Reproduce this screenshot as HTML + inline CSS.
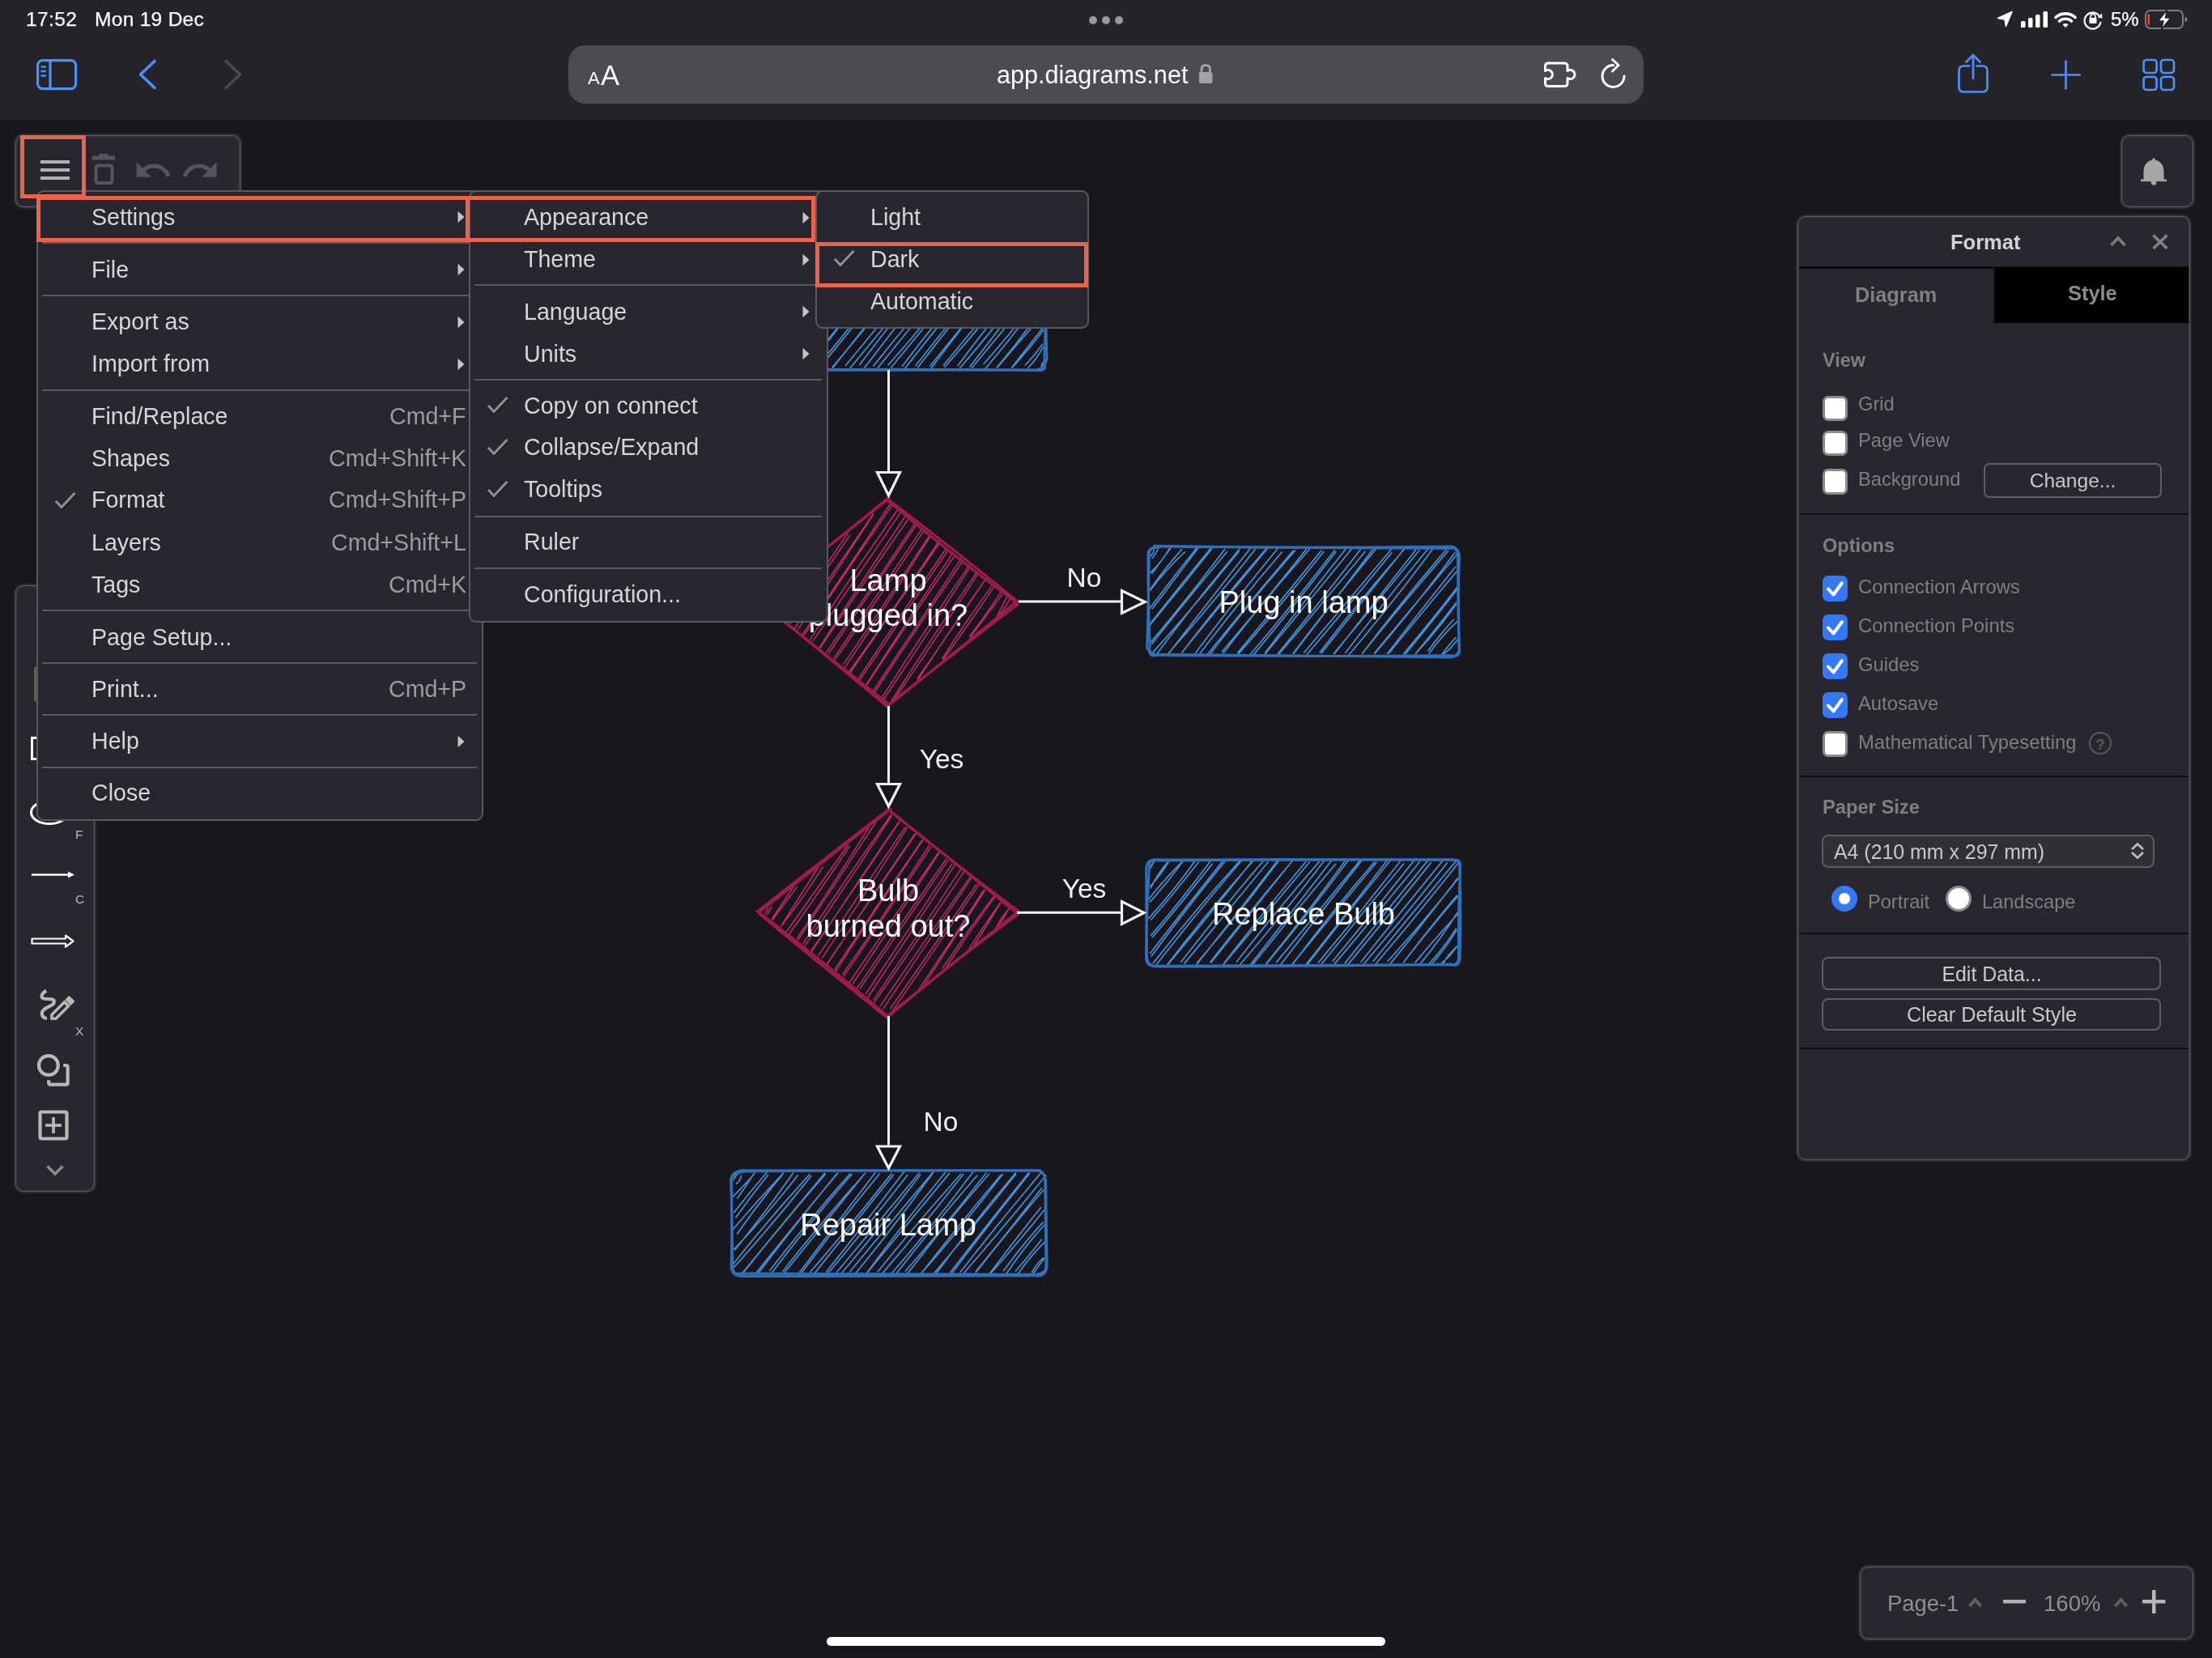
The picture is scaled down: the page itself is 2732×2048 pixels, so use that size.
<!DOCTYPE html>
<html><head><meta charset="utf-8"><title>draw.io</title>
<style>
html,body{margin:0;padding:0;}
body{width:2732px;height:2048px;overflow:hidden;position:relative;background:#19161d;font-family:"Liberation Sans", sans-serif;}
.t{position:absolute;white-space:nowrap;line-height:1;font-family:"Liberation Sans", sans-serif;will-change:transform;}
</style></head><body>
<div style="position:absolute;left:0.0px;top:0.0px;width:2732.0px;height:148.0px;background:#252429"></div>
<div class="t" style="left:32.0px;top:11.7px;font-size:24.5px;color:#fff;font-weight:400;-webkit-text-stroke:0.25px #fff;letter-spacing:0.4px">17:52</div>
<div class="t" style="left:116.5px;top:11.7px;font-size:24.5px;color:#fff;font-weight:400;-webkit-text-stroke:0.25px #fff;letter-spacing:0.3px">Mon 19 Dec</div>
<div style="position:absolute;left:1345px;top:20px;width:10px;height:10px;border-radius:5px;background:#9a999e"></div>
<div style="position:absolute;left:1361px;top:20px;width:10px;height:10px;border-radius:5px;background:#9a999e"></div>
<div style="position:absolute;left:1377px;top:20px;width:10px;height:10px;border-radius:5px;background:#9a999e"></div>
<div class="t" style="left:2607.0px;top:11.9px;font-size:24px;color:#fff;font-weight:400;-webkit-text-stroke:0.25px #fff">5%</div>
<div style="position:absolute;left:702.0px;top:56.0px;width:1328.0px;height:72.0px;background:#4c4b51;border-radius:21px"></div>
<div class="t" style="left:725.5px;top:86.4px;font-size:22px;color:#fff;font-weight:400;">A</div>
<div class="t" style="left:741.5px;top:75.8px;font-size:34.5px;color:#fff;font-weight:400;">A</div>
<div class="t" style="left:1231.0px;top:77.1px;font-size:30.6px;color:#fff;font-weight:400;">app.diagrams.net</div>
<svg style="position:absolute;left:0;top:0" width="2732" height="148" viewBox="0 0 2732 148">
<g fill="none" stroke="#4f8ef6" stroke-width="3.2" stroke-linecap="round" stroke-linejoin="round">
 <rect x="46.6" y="74.6" width="47" height="35" rx="6"/>
 <line x1="62" y1="75" x2="62" y2="110"/>
 <line x1="51.5" y1="82.5" x2="56" y2="82.5" stroke-width="2.4"/>
 <line x1="51.5" y1="88" x2="56" y2="88" stroke-width="2.4"/>
 <line x1="51.5" y1="93.5" x2="56" y2="93.5" stroke-width="2.4"/>
 <polyline points="191,75.5 173.5,92 191,108.5" stroke-width="3.6"/>
 <polyline points="279,75.5 296.5,92 279,108.5" stroke="#4a494f" stroke-width="3.6"/>
</g><g fill="none" stroke="#4f8ef6" stroke-width="2.7" stroke-linecap="round" stroke-linejoin="round">
 <path d="M2432.5 81.5H2425.5Q2419.5 81.5 2419.5 87.5V107.5Q2419.5 113.5 2425.5 113.5H2448.5Q2454.5 113.5 2454.5 107.5V87.5Q2454.5 81.5 2448.5 81.5H2441.5"/>
 <line x1="2437" y1="69" x2="2437" y2="97"/>
 <polyline points="2428.5,76.5 2437,68 2445.5,76.5"/>
 <line x1="2551.5" y1="75.5" x2="2551.5" y2="109.5"/>
 <line x1="2534.5" y1="92.5" x2="2568.5" y2="92.5"/>
 <rect x="2647.6" y="74" width="16" height="16" rx="3.5"/>
 <rect x="2669" y="74" width="16" height="16" rx="3.5"/>
 <rect x="2647.6" y="95" width="16" height="16" rx="3.5"/>
 <rect x="2669" y="95" width="16" height="16" rx="3.5"/>
</g>
<!-- lock -->
<g fill="#a3a2a8">
 <rect x="1481" y="89" width="16.5" height="14" rx="2"/>
</g>
<path d="M1484 90V86Q1484 80.5 1489.2 80.5Q1494.5 80.5 1494.5 86V90" fill="none" stroke="#a3a2a8" stroke-width="2.8"/>
<!-- puzzle -->
<path d="M1912 78H1932Q1936 78 1936 82V87.5A5.6 5.6 0 1 1 1936 96.5V102.5Q1936 106.5 1932 106.5H1912Q1908.5 106.5 1908.5 102.5V96.5A5.6 5.6 0 1 0 1908.5 87.5V82Q1908.5 78 1912 78Z" fill="none" stroke="#fff" stroke-width="3" stroke-linejoin="round"/>
<!-- reload -->
<path d="M2006 94A13.5 13.5 0 1 1 1992.5 80.5" fill="none" stroke="#fff" stroke-width="3" stroke-linecap="round"/>
<polyline points="1991.5,73.5 1999,80.5 1991.5,88" fill="none" stroke="#fff" stroke-width="3" stroke-linecap="round" stroke-linejoin="round"/>
<!-- location arrow -->
<path d="M2485 14.5L2467.5 22.5L2476 24L2477.5 32.5Z" fill="#fff" stroke="#fff" stroke-width="1.5" stroke-linejoin="round"/>
<!-- signal -->
<g fill="#fff">
 <rect x="2496" y="26" width="5.5" height="8" rx="1.5"/>
 <rect x="2505" y="22" width="5.5" height="12" rx="1.5"/>
 <rect x="2514" y="18" width="5.5" height="16" rx="1.5"/>
 <rect x="2523.5" y="14" width="5.5" height="20" rx="1.5"/>
</g>
<!-- wifi -->
<g fill="none" stroke="#fff" stroke-width="3.6" stroke-linecap="round">
 <path d="M2539 21.5A18 18 0 0 1 2563 21.5"/>
 <path d="M2543.5 26A11.5 11.5 0 0 1 2558.5 26"/>
</g>
<path d="M2547.5 30.5L2551 34L2554.5 30.5A5 5 0 0 0 2547.5 30.5Z" fill="#fff"/>
<!-- rotation lock -->
<path d="M2593.5 21A10 10 0 1 0 2594.5 27" fill="none" stroke="#fff" stroke-width="2.2"/>
<path d="M2590.5 21.5L2596.5 22.5L2596 16.5Z" fill="#fff"/>
<rect x="2580.5" y="22" width="9" height="7" rx="1" fill="#fff"/>
<path d="M2582 22.5V20.5A3 3 0 0 1 2588 20.5V22.5" fill="none" stroke="#fff" stroke-width="1.6"/>
<!-- battery -->
<rect x="2650" y="13" width="46" height="22" rx="6" fill="none" stroke="#7c7b80" stroke-width="2"/>
<path d="M2698.5 21V27A3 3 0 0 0 2698.5 21Z" fill="#7c7b80"/>
<rect x="2652.5" y="17.5" width="2.5" height="13" fill="#e5473b"/>
<path d="M2676.5 12L2665.5 26H2672L2669.5 36.5L2681 22H2674.5Z" fill="#fff" stroke="#232228" stroke-width="1.5"/>
</svg>
<div style="position:absolute;left:0.0px;top:148.0px;width:2732.0px;height:1900.0px;background:#19161d"></div>
<svg style="position:absolute;left:0;top:0" width="2732" height="2048" viewBox="0 0 2732 2048">
<path d="M907.2 333.4Q909.9 328.3 912.6 323.0M907.9 333.3Q913.5 329.8 916.2 324.0M902.9 352.8Q918.2 338.9 931.6 323.4M908.4 357.4Q920.4 342.5 931.3 326.6M904.9 375.0Q924.0 346.3 946.3 320.0M906.8 376.2Q930.0 350.9 949.8 322.9M905.7 394.8Q934.7 359.2 964.1 323.9M909.1 398.8Q938.6 363.8 966.0 327.3M904.3 415.7Q943.3 369.3 979.7 320.7M906.9 417.4Q947.1 373.7 983.8 327.2M906.0 439.7Q954.6 382.7 998.4 322.0M907.9 439.1Q953.8 380.7 1002.0 324.2M910.8 455.2Q961.6 387.7 1016.2 323.3M909.5 453.4Q962.7 387.6 1019.0 324.3M925.8 451.2Q977.5 385.9 1032.8 323.6M929.0 453.3Q980.1 387.0 1033.6 322.5M944.3 450.3Q995.5 386.6 1049.5 325.2M946.2 454.8Q999.7 391.6 1048.2 324.4M961.3 454.2Q1012.4 387.1 1065.6 321.6M962.2 455.6Q1015.5 389.5 1067.7 322.5M979.4 454.3Q1031.5 388.8 1082.8 322.8M979.4 451.8Q1034.9 389.6 1087.2 324.9M995.2 454.0Q1047.2 387.5 1102.3 323.4M998.4 453.0Q1047.5 387.7 1100.4 325.5M1009.6 453.0Q1061.8 388.0 1116.3 325.1M1013.9 452.4Q1066.6 389.0 1117.1 323.8M1028.0 453.9Q1082.4 389.1 1135.8 323.3M1029.1 453.8Q1079.7 388.1 1132.7 324.3M1044.4 451.5Q1098.2 386.6 1151.2 321.2M1048.5 456.5Q1102.5 391.7 1155.0 325.7M1061.8 450.6Q1111.3 384.2 1165.5 321.7M1067.7 454.3Q1118.1 389.5 1167.2 323.7M1079.0 451.9Q1130.4 386.9 1186.1 325.3M1083.5 455.2Q1136.3 391.5 1187.0 326.1M1096.9 451.0Q1151.1 389.5 1201.3 324.9M1100.9 453.8Q1153.5 390.0 1205.3 325.5M1114.4 452.3Q1164.8 385.9 1219.3 322.9M1117.7 454.9Q1168.4 390.4 1220.3 326.9M1131.1 451.5Q1181.8 386.2 1236.7 324.3M1133.8 453.6Q1184.9 387.2 1238.7 323.1M1148.7 452.2Q1200.3 387.3 1254.3 324.3M1149.2 456.1Q1199.9 388.2 1253.9 323.0M1165.5 451.0Q1217.3 387.1 1270.7 324.7M1166.9 453.3Q1222.3 390.6 1273.6 324.7M1183.0 451.5Q1232.7 385.3 1286.1 322.0M1185.1 455.2Q1239.1 392.6 1288.6 326.3M1197.9 452.9Q1241.2 395.9 1287.3 341.1M1200.5 454.3Q1246.1 400.7 1288.3 344.3M1215.2 449.5Q1252.2 407.4 1285.6 362.2M1216.8 455.7Q1253.9 411.8 1288.1 365.5M1231.3 453.8Q1260.5 419.3 1286.4 382.2M1232.2 453.4Q1261.2 419.4 1290.8 385.8M1251.2 453.0Q1270.9 431.2 1288.8 407.8M1249.6 453.9Q1268.4 429.7 1287.5 405.8M1266.3 451.0Q1277.9 438.9 1287.5 425.3M1269.7 454.8Q1280.7 442.8 1288.7 428.4M1286.4 452.6Q1286.0 448.4 1289.3 447.2M1287.2 455.5Q1288.2 452.7 1288.6 449.4" stroke="#3f93dc" stroke-width="1.7" fill="none" stroke-linecap="round"/>
<path d="M916.3 322.3Q1097.5 323.0 1280.8 321.7Q1289.2 322.3 1292.4 331.8Q1292.0 388.5 1289.7 448.4Q1293.9 458.9 1281.2 457.3Q1097.5 455.2 916.5 457.6Q903.1 453.5 903.7 446.3Q905.2 388.5 903.9 328.2Q905.9 318.4 919.8 319.6" stroke="#2f70b8" stroke-width="3.0" fill="none" stroke-linejoin="round" stroke-linecap="round"/><path d="M913.0 322.3Q1097.5 319.4 1278.9 321.1Q1292.3 323.0 1291.8 333.7Q1291.0 388.5 1293.0 443.5Q1289.3 456.2 1279.7 457.0Q1097.5 456.6 914.1 457.5Q904.4 454.9 903.5 448.1Q905.8 388.5 902.7 333.1Q906.8 321.1 918.4 319.7" stroke="#2f70b8" stroke-width="3.0" fill="none" stroke-linejoin="round" stroke-linecap="round"/>
<path d="M1420.6 687.1Q1425.4 683.7 1425.4 676.4M1423.4 689.5Q1426.6 684.4 1429.9 679.5M1420.8 707.4Q1435.2 693.7 1445.1 676.3M1423.1 708.1Q1433.9 692.6 1445.4 677.7M1420.8 727.8Q1438.7 702.0 1459.6 678.6M1420.9 728.9Q1439.8 703.4 1463.4 681.8M1420.1 751.4Q1448.5 713.4 1478.3 676.5M1423.4 751.8Q1451.6 714.5 1479.8 677.1M1419.6 771.7Q1457.1 723.7 1495.8 676.8M1420.5 771.6Q1458.9 725.7 1496.0 678.7M1421.9 792.5Q1469.0 736.9 1512.7 678.4M1422.7 795.3Q1468.1 737.7 1515.3 681.7M1423.6 806.1Q1478.9 745.0 1530.2 680.9M1427.3 809.9Q1477.1 742.3 1531.0 678.0M1444.2 806.3Q1494.1 741.0 1544.9 676.5M1443.5 806.5Q1498.9 744.2 1550.2 678.7M1460.4 805.0Q1512.8 741.3 1565.2 677.6M1460.0 806.1Q1509.9 739.8 1564.4 677.3M1476.6 806.5Q1526.1 740.4 1578.8 676.8M1479.5 810.6Q1529.3 744.7 1583.1 682.0M1491.9 807.6Q1543.7 743.2 1597.1 680.2M1494.8 807.9Q1544.8 742.0 1599.6 680.0M1509.4 804.7Q1562.5 742.8 1613.1 678.9M1510.6 807.2Q1561.4 741.0 1617.0 678.7M1529.0 805.9Q1581.1 743.5 1631.9 680.1M1529.0 808.4Q1583.4 746.1 1634.9 681.5M1544.5 808.0Q1598.0 745.3 1648.2 680.1M1547.5 809.6Q1600.0 746.6 1650.0 681.5M1562.7 806.3Q1612.4 740.6 1663.6 676.3M1562.5 807.7Q1616.3 743.6 1669.0 678.5M1578.1 807.8Q1630.0 743.9 1680.4 678.8M1579.9 807.5Q1633.7 745.0 1686.1 681.3M1597.6 807.4Q1647.6 742.7 1696.5 677.2M1597.3 807.0Q1647.1 740.9 1699.9 677.4M1610.8 806.0Q1665.0 742.2 1718.8 678.0M1614.4 808.2Q1667.4 746.0 1718.9 682.7M1630.2 805.8Q1680.5 739.8 1735.2 677.5M1632.1 806.6Q1683.3 742.0 1734.6 677.5M1648.1 807.5Q1699.6 742.0 1750.9 676.3M1647.5 807.0Q1700.6 743.6 1753.1 679.7M1661.7 806.4Q1711.8 740.7 1764.5 677.0M1664.9 810.3Q1719.2 745.8 1769.5 678.2M1682.6 807.2Q1732.7 740.9 1787.0 678.0M1683.0 806.7Q1734.3 742.8 1788.2 680.9M1698.0 807.1Q1749.7 747.0 1796.6 683.1M1698.3 805.8Q1749.0 744.8 1800.1 684.2M1713.4 807.4Q1755.1 753.6 1797.5 700.2M1715.5 806.7Q1757.5 755.4 1800.3 704.6M1733.7 807.2Q1767.8 767.2 1799.6 725.4M1733.9 810.1Q1768.6 768.2 1802.0 725.2M1748.4 807.4Q1774.0 776.2 1798.7 744.3M1749.1 806.6Q1776.0 778.4 1798.2 746.4M1764.1 803.6Q1778.5 783.6 1795.1 765.5M1765.2 807.0Q1780.3 785.7 1799.7 767.9M1781.1 807.9Q1788.9 797.3 1797.9 787.7M1783.3 807.6Q1794.1 799.3 1801.6 788.3" stroke="#3f93dc" stroke-width="1.7" fill="none" stroke-linecap="round"/>
<path d="M1425.9 674.3Q1610.0 677.4 1792.2 677.2Q1799.8 675.5 1800.4 687.9Q1800.9 743.0 1802.2 802.9Q1800.5 810.3 1793.0 811.9Q1610.0 809.7 1427.7 808.2Q1420.8 807.5 1416.7 800.4Q1418.4 743.0 1419.3 684.8Q1420.2 673.5 1430.8 676.7" stroke="#2f70b8" stroke-width="3.0" fill="none" stroke-linejoin="round" stroke-linecap="round"/><path d="M1426.0 675.1Q1610.0 677.0 1792.7 675.0Q1799.4 675.1 1802.5 685.2Q1799.8 743.0 1802.4 800.4Q1804.0 812.6 1794.0 809.7Q1610.0 811.3 1427.3 809.2Q1417.9 812.6 1420.2 798.5Q1417.9 743.0 1417.9 685.2Q1417.9 675.3 1430.7 676.3" stroke="#2f70b8" stroke-width="3.0" fill="none" stroke-linejoin="round" stroke-linecap="round"/>
<path d="M1421.2 1072.1Q1422.3 1066.4 1426.5 1063.3M1420.9 1072.0Q1423.3 1068.2 1425.5 1064.2M1421.1 1094.3Q1434.0 1080.2 1443.8 1063.7M1421.2 1096.8Q1430.3 1078.4 1443.6 1063.4M1418.0 1111.7Q1437.2 1086.8 1459.9 1064.6M1420.7 1113.9Q1442.1 1090.1 1460.8 1064.1M1418.7 1134.4Q1449.7 1100.7 1476.0 1063.3M1421.7 1136.0Q1452.0 1101.5 1480.2 1065.3M1421.5 1155.6Q1460.1 1110.8 1495.2 1063.2M1423.5 1157.7Q1461.1 1113.0 1497.3 1067.1M1420.4 1177.7Q1465.0 1120.2 1510.4 1063.4M1422.2 1181.1Q1465.6 1121.7 1512.2 1064.9M1424.3 1189.6Q1475.1 1125.2 1530.4 1064.3M1428.0 1192.1Q1478.6 1126.9 1532.4 1064.3M1442.1 1191.0Q1492.2 1125.7 1547.0 1064.2M1442.7 1191.3Q1496.0 1127.9 1547.0 1062.7M1458.8 1188.1Q1508.8 1123.4 1562.0 1061.4M1462.7 1190.4Q1514.3 1127.6 1566.0 1065.0M1477.9 1191.5Q1528.0 1127.8 1577.6 1063.6M1478.9 1188.7Q1531.4 1127.7 1579.5 1063.1M1494.7 1188.6Q1544.5 1124.7 1596.6 1062.7M1496.0 1188.7Q1545.8 1126.0 1595.9 1063.5M1511.3 1190.5Q1560.4 1126.0 1612.9 1064.2M1511.0 1191.3Q1564.1 1128.3 1617.2 1065.2M1527.2 1188.2Q1576.4 1125.0 1629.1 1064.6M1531.8 1191.3Q1584.9 1129.0 1634.9 1064.2M1544.6 1191.4Q1595.3 1126.1 1646.1 1060.9M1547.1 1191.4Q1597.3 1128.5 1649.5 1067.2M1564.2 1189.9Q1615.1 1126.9 1662.7 1061.4M1563.1 1192.0Q1615.6 1129.2 1664.7 1063.6M1576.5 1188.6Q1628.5 1125.0 1680.8 1061.7M1582.1 1191.0Q1631.5 1126.5 1681.9 1062.9M1597.0 1190.6Q1644.8 1125.8 1697.6 1064.9M1596.4 1190.6Q1647.9 1127.8 1699.9 1065.5M1612.7 1191.9Q1663.3 1128.2 1712.7 1063.5M1614.4 1191.8Q1664.7 1127.0 1716.6 1063.5M1628.4 1188.9Q1680.6 1126.7 1730.5 1062.5M1631.5 1191.8Q1681.9 1128.6 1733.9 1066.7M1646.0 1187.2Q1698.1 1124.5 1748.5 1060.4M1648.8 1190.1Q1701.5 1127.8 1753.3 1064.7M1661.2 1189.6Q1712.8 1124.8 1765.2 1060.9M1664.3 1192.1Q1716.4 1129.6 1767.1 1065.9M1680.9 1188.2Q1730.8 1125.4 1781.6 1063.4M1682.3 1193.2Q1736.2 1130.7 1787.3 1065.9M1696.1 1187.3Q1746.5 1124.8 1798.4 1063.6M1699.5 1190.2Q1752.4 1128.4 1802.4 1064.2M1714.1 1187.3Q1759.1 1138.2 1800.2 1086.0M1716.8 1190.9Q1759.6 1138.7 1800.3 1084.8M1733.7 1188.6Q1765.7 1146.5 1800.7 1106.9M1733.5 1188.7Q1765.2 1146.5 1799.4 1106.4M1748.1 1188.6Q1773.7 1158.1 1800.6 1128.7M1752.4 1192.7Q1778.7 1161.0 1800.9 1126.0M1765.9 1189.5Q1784.1 1169.9 1798.3 1147.1M1769.2 1189.8Q1785.8 1170.8 1799.1 1149.1M1781.0 1189.2Q1791.5 1181.0 1798.7 1170.1M1782.1 1190.6Q1789.1 1178.5 1799.4 1168.9" stroke="#3f93dc" stroke-width="1.7" fill="none" stroke-linecap="round"/>
<path d="M1430.4 1062.9Q1610.2 1061.7 1791.8 1061.8Q1804.4 1060.3 1803.4 1072.8Q1800.9 1127.0 1801.7 1182.8Q1800.9 1192.3 1793.4 1191.6Q1610.2 1193.1 1426.1 1193.3Q1416.5 1193.9 1415.5 1184.0Q1415.9 1127.0 1419.5 1071.6Q1417.3 1060.5 1432.2 1061.8" stroke="#2f70b8" stroke-width="3.0" fill="none" stroke-linejoin="round" stroke-linecap="round"/><path d="M1429.0 1062.1Q1610.2 1060.9 1796.0 1062.5Q1805.1 1060.5 1802.7 1071.4Q1804.8 1127.0 1803.1 1183.2Q1802.6 1195.4 1791.9 1191.0Q1610.2 1194.0 1429.9 1194.0Q1418.1 1194.5 1416.6 1183.6Q1415.6 1127.0 1415.8 1070.7Q1417.5 1060.4 1428.8 1061.9" stroke="#2f70b8" stroke-width="3.0" fill="none" stroke-linejoin="round" stroke-linecap="round"/>
<path d="M905.9 1457.2Q908.7 1451.4 914.1 1447.8M909.4 1462.4Q914.3 1458.9 915.5 1452.4M905.3 1478.2Q918.5 1464.7 931.1 1450.7M910.8 1480.2Q921.8 1464.3 932.3 1448.1M906.7 1497.6Q926.6 1471.5 948.3 1446.7M908.8 1503.9Q927.9 1477.1 948.4 1451.5M904.9 1519.0Q935.3 1483.2 967.6 1448.9M910.6 1524.0Q936.6 1486.8 965.6 1451.9M907.7 1543.7Q945.3 1497.9 979.5 1449.3M906.9 1542.8Q948.6 1499.3 985.4 1451.8M904.6 1562.7Q950.1 1504.8 1000.0 1450.6M906.9 1565.0Q956.2 1510.3 1001.8 1452.6M917.9 1571.4Q967.9 1510.1 1018.5 1449.3M916.8 1573.7Q966.6 1510.8 1019.3 1450.4M933.5 1572.9Q983.4 1510.5 1034.6 1449.1M936.4 1572.8Q983.6 1511.1 1032.7 1450.9M950.8 1569.3Q998.3 1508.0 1049.9 1449.9M953.9 1571.6Q1000.7 1509.2 1052.0 1450.5M966.8 1570.3Q1015.6 1508.1 1068.5 1449.3M968.0 1572.9Q1017.9 1512.0 1067.2 1450.7M985.7 1574.0Q1033.1 1511.2 1080.8 1448.7M988.9 1573.7Q1035.9 1510.7 1086.0 1450.2M1001.1 1570.8Q1052.4 1511.5 1101.0 1449.9M1005.0 1574.1Q1054.3 1512.8 1103.4 1451.2M1020.8 1570.9Q1069.5 1509.3 1117.1 1446.8M1021.0 1574.8Q1072.4 1514.2 1121.0 1451.3M1033.7 1571.3Q1084.4 1510.2 1135.0 1449.2M1037.2 1575.2Q1088.8 1514.7 1136.7 1451.1M1049.7 1570.8Q1100.8 1509.1 1152.5 1447.9M1055.6 1574.2Q1106.1 1513.0 1152.5 1448.5M1070.8 1572.1Q1117.4 1508.8 1167.5 1448.2M1070.3 1573.0Q1121.4 1511.4 1172.3 1449.6M1084.2 1570.8Q1133.8 1509.2 1186.7 1450.3M1088.6 1574.4Q1140.7 1513.7 1189.8 1450.6M1101.8 1572.3Q1154.1 1511.9 1201.7 1447.8M1105.4 1575.3Q1154.2 1512.3 1206.6 1452.2M1118.5 1570.0Q1170.1 1511.0 1217.9 1448.9M1120.7 1573.5Q1169.0 1510.0 1221.6 1450.0M1137.3 1573.7Q1185.4 1511.4 1236.3 1451.3M1137.8 1573.0Q1190.2 1513.5 1238.3 1450.6M1156.0 1573.4Q1202.9 1509.3 1254.4 1448.8M1154.4 1571.9Q1205.4 1512.0 1254.6 1450.5M1173.9 1571.5Q1221.5 1509.9 1270.2 1449.1M1175.4 1572.9Q1222.8 1510.5 1271.7 1449.3M1186.2 1571.3Q1234.7 1508.7 1286.0 1448.4M1190.1 1573.0Q1241.9 1513.1 1291.9 1451.8M1205.8 1569.9Q1247.0 1519.6 1286.4 1467.8M1205.1 1571.9Q1245.7 1520.0 1288.7 1470.0M1222.9 1572.4Q1253.5 1531.5 1285.4 1491.7M1222.9 1573.7Q1257.3 1535.2 1289.4 1495.0M1239.6 1569.6Q1261.8 1538.2 1288.1 1510.2M1243.4 1572.7Q1264.4 1541.2 1289.9 1513.2M1254.2 1570.2Q1270.9 1551.1 1286.6 1531.1M1256.8 1574.2Q1271.6 1552.8 1290.0 1534.3M1274.7 1571.5Q1279.9 1561.2 1288.6 1553.8M1275.4 1574.7Q1281.9 1564.2 1289.6 1554.7" stroke="#3f93dc" stroke-width="1.7" fill="none" stroke-linecap="round"/>
<path d="M917.2 1445.8Q1098.0 1446.1 1280.1 1445.7Q1288.2 1444.1 1291.6 1457.4Q1292.4 1511.0 1293.1 1563.8Q1292.0 1577.5 1279.3 1575.8Q1098.0 1575.7 917.7 1576.6Q903.4 1575.8 903.2 1564.6Q904.5 1511.0 903.1 1456.3Q904.0 1447.0 917.7 1445.5" stroke="#2f70b8" stroke-width="3.0" fill="none" stroke-linejoin="round" stroke-linecap="round"/><path d="M914.4 1446.9Q1098.0 1445.5 1282.0 1445.9Q1288.6 1446.1 1290.7 1454.9Q1291.4 1511.0 1291.9 1565.3Q1292.2 1572.1 1280.3 1574.4Q1098.0 1573.1 914.4 1573.0Q905.0 1575.5 904.9 1564.0Q903.9 1511.0 902.9 1456.1Q907.4 1447.4 917.6 1447.7" stroke="#2f70b8" stroke-width="3.0" fill="none" stroke-linejoin="round" stroke-linecap="round"/>
<path d="M943.5 746.0Q946.8 741.3 951.0 737.2M947.0 746.5Q949.5 743.3 951.1 739.5M952.6 752.3Q969.1 732.4 983.0 710.9M954.0 753.4Q968.0 733.0 982.0 712.5M964.1 761.8Q987.7 721.9 1013.4 683.4M963.9 762.0Q989.3 723.9 1014.4 685.6M972.5 768.2Q1010.1 713.3 1047.4 658.2M976.2 769.6Q1012.5 715.1 1049.8 661.3M981.5 775.8Q1030.6 705.6 1078.5 634.6M985.9 777.1Q1032.8 706.4 1078.8 635.2M991.6 783.1Q1046.4 703.4 1099.6 622.5M993.5 784.2Q1047.0 702.8 1102.6 622.9M1000.4 790.1Q1053.6 708.3 1109.6 628.3M1004.1 791.7Q1058.9 711.4 1113.8 631.2M1011.6 800.6Q1063.7 719.0 1117.5 638.5M1013.1 800.0Q1066.6 720.0 1121.8 641.0M1020.9 805.4Q1076.8 726.4 1130.4 645.8M1023.6 806.7Q1078.1 727.6 1131.9 648.0M1030.2 812.4Q1084.6 733.7 1137.9 654.3M1030.7 815.6Q1087.8 735.9 1142.0 654.2M1041.8 820.7Q1095.9 740.6 1149.1 659.9M1043.6 824.7Q1096.7 744.5 1148.4 663.3M1048.3 830.5Q1105.7 750.3 1159.9 668.0M1049.7 831.4Q1105.2 750.7 1160.8 670.0M1060.1 838.4Q1113.9 757.1 1169.2 676.8M1062.1 839.7Q1116.3 759.4 1171.1 679.5M1070.4 845.0Q1122.3 763.7 1176.3 683.9M1069.6 847.3Q1122.8 766.5 1178.6 687.3M1078.5 853.5Q1133.2 772.0 1187.1 689.9M1080.3 855.0Q1134.1 773.2 1189.4 692.5M1088.5 862.8Q1141.4 779.5 1197.1 698.1M1091.3 864.0Q1145.8 783.2 1198.0 700.7M1101.2 865.5Q1152.2 785.3 1206.2 707.1M1102.9 866.3Q1156.6 788.7 1207.5 709.1M1133.2 837.6Q1175.3 778.1 1215.8 717.6M1133.0 840.8Q1174.1 776.7 1218.0 714.4M1164.0 813.1Q1192.9 767.4 1225.1 723.9M1164.9 814.5Q1196.9 771.0 1226.8 726.1M1197.5 786.0Q1217.6 759.8 1235.6 732.1M1198.7 786.9Q1217.8 760.6 1237.6 734.7M1231.1 761.5Q1237.8 749.2 1244.0 736.7M1230.6 763.4Q1240.2 752.3 1247.7 739.9" stroke="#c6286f" stroke-width="1.5" fill="none" stroke-linecap="round"/>
<path d="M1096.8 616.7Q1178.9 678.9 1256.7 742.9M1255.4 743.1Q1178.3 807.1 1098.8 870.5M1098.4 870.3Q1016.2 805.9 935.5 742.1M934.9 744.0Q1016.2 681.9 1097.0 615.1" stroke="#9f1c46" stroke-width="3.2" fill="none" stroke-linecap="round"/><path d="M1096.0 618.0Q1174.2 684.2 1256.6 745.3M1257.1 746.4Q1177.7 807.3 1096.0 871.5M1096.3 872.9Q1016.4 807.3 939.8 743.1M940.0 742.2Q1019.9 677.3 1098.2 615.4" stroke="#9f1c46" stroke-width="3.2" fill="none" stroke-linecap="round"/>
<path d="M945.2 1128.4Q947.1 1124.8 949.1 1121.2M947.2 1130.0Q950.0 1125.0 953.1 1120.2M953.5 1135.0Q967.7 1114.2 981.2 1093.0M954.4 1136.0Q969.2 1115.7 984.3 1095.5M964.6 1144.1Q988.6 1105.7 1012.9 1067.5M965.8 1142.9Q992.8 1107.9 1016.5 1070.6M971.4 1150.8Q1009.2 1097.5 1047.0 1044.2M974.8 1153.8Q1013.0 1100.4 1049.1 1045.5M984.5 1158.9Q1032.2 1088.0 1077.4 1015.3M985.9 1160.3Q1033.7 1088.6 1081.3 1016.7M992.2 1165.0Q1045.4 1084.2 1101.5 1005.3M994.3 1167.9Q1048.7 1088.6 1101.1 1007.9M1002.6 1173.3Q1057.6 1095.0 1110.6 1015.4M1001.8 1176.2Q1055.9 1094.6 1111.1 1013.8M1011.0 1180.1Q1064.1 1100.8 1117.9 1021.9M1015.4 1183.2Q1069.5 1103.9 1120.3 1022.4M1021.4 1191.5Q1074.5 1110.1 1129.7 1030.1M1022.0 1189.7Q1075.9 1109.5 1131.1 1030.1M1031.1 1197.3Q1084.5 1116.2 1140.0 1036.5M1031.8 1200.1Q1084.4 1118.3 1139.5 1038.2M1040.7 1203.5Q1095.7 1125.0 1147.4 1044.4M1042.3 1205.8Q1095.7 1125.9 1149.6 1046.5M1048.8 1214.0Q1103.5 1133.5 1158.8 1053.4M1053.2 1215.4Q1107.2 1134.9 1159.8 1053.5M1058.2 1221.1Q1112.8 1140.6 1168.7 1061.0M1062.3 1220.9Q1116.2 1141.7 1170.8 1062.9M1069.5 1227.5Q1122.4 1147.2 1175.9 1067.2M1072.1 1231.5Q1126.2 1150.5 1179.1 1068.6M1078.8 1235.4Q1134.0 1155.5 1186.5 1073.9M1079.8 1238.1Q1136.2 1158.5 1190.3 1077.3M1087.3 1242.7Q1141.2 1162.5 1197.8 1084.1M1090.9 1246.2Q1144.7 1165.0 1199.6 1084.6M1099.8 1245.8Q1152.6 1169.2 1205.7 1092.7M1101.6 1249.6Q1155.7 1171.3 1209.1 1092.6M1135.1 1221.7Q1175.9 1161.6 1214.6 1100.0M1136.6 1224.2Q1176.3 1161.9 1216.4 1099.9M1163.8 1196.1Q1194.3 1151.3 1226.7 1107.8M1166.4 1198.0Q1196.5 1151.6 1229.3 1107.1M1196.8 1171.8Q1215.4 1142.9 1235.6 1115.0M1200.8 1171.5Q1218.2 1143.4 1235.7 1115.5M1229.7 1147.1Q1235.9 1134.4 1245.2 1123.8M1231.4 1146.6Q1239.5 1135.2 1245.8 1122.6" stroke="#c6286f" stroke-width="1.5" fill="none" stroke-linecap="round"/>
<path d="M1096.5 999.3Q1174.1 1061.4 1255.5 1127.7M1257.6 1126.2Q1177.8 1187.8 1098.9 1254.0M1096.0 1255.0Q1018.7 1189.0 937.8 1127.1M939.3 1125.5Q1019.1 1063.1 1099.9 999.4" stroke="#9f1c46" stroke-width="3.2" fill="none" stroke-linecap="round"/><path d="M1099.4 1001.7Q1176.4 1064.9 1257.0 1124.8M1258.7 1128.4Q1174.8 1189.9 1095.7 1255.5M1096.5 1257.7Q1015.0 1193.0 938.2 1129.1M935.3 1126.1Q1014.5 1063.7 1095.5 1001.5" stroke="#9f1c46" stroke-width="3.2" fill="none" stroke-linecap="round"/>
<g stroke="#f2f2f2" stroke-width="3" fill="none">
 <line x1="1097.5" y1="457" x2="1097.5" y2="582"/>
 <line x1="1097.5" y1="872" x2="1097.5" y2="967"/>
 <line x1="1097.5" y1="1255" x2="1097.5" y2="1414.5"/>
 <line x1="1258" y1="743" x2="1384" y2="743"/>
 <line x1="1256" y1="1127.3" x2="1384" y2="1127.3"/>
</g>
<g stroke="#f2f2f2" stroke-width="3.2" fill="none" stroke-linejoin="miter">
 <path d="M1083.5 583.5H1111.5L1097.5 612Z"/>
 <path d="M1083.5 968.5H1111.5L1097.5 996Z"/>
 <path d="M1083.5 1416H1111.5L1097.5 1443Z"/>
 <path d="M1385.5 729.5V757.5L1414 743.5Z"/>
 <path d="M1385.5 1113.5V1141.5L1413 1127.5Z"/>
</g>
</svg>
<div class="t" style="left:497.0px;width:1200px;text-align:center;top:368.8px;font-size:38px;color:#ffffff;font-weight:400;">Lamp doesn't work</div>
<div class="t" style="left:497.0px;width:1200px;text-align:center;top:697.5px;font-size:38px;color:#ffffff;font-weight:400;">Lamp</div>
<div class="t" style="left:497.0px;width:1200px;text-align:center;top:740.8px;font-size:38px;color:#ffffff;font-weight:400;">plugged in?</div>
<div class="t" style="left:739.0px;width:1200px;text-align:center;top:697.2px;font-size:33.5px;color:#f0f0f0;font-weight:400;">No</div>
<div class="t" style="left:1009.5px;width:1200px;text-align:center;top:725.3px;font-size:38px;color:#ffffff;font-weight:400;">Plug in lamp</div>
<div class="t" style="left:563.0px;width:1200px;text-align:center;top:921.0px;font-size:33.5px;color:#f0f0f0;font-weight:400;">Yes</div>
<div class="t" style="left:497.0px;width:1200px;text-align:center;top:1081.2px;font-size:38px;color:#ffffff;font-weight:400;">Bulb</div>
<div class="t" style="left:497.0px;width:1200px;text-align:center;top:1124.8px;font-size:38px;color:#ffffff;font-weight:400;">burned out?</div>
<div class="t" style="left:739.0px;width:1200px;text-align:center;top:1080.6px;font-size:33.5px;color:#f0f0f0;font-weight:400;">Yes</div>
<div class="t" style="left:1009.7px;width:1200px;text-align:center;top:1109.8px;font-size:38px;color:#ffffff;font-weight:400;">Replace Bulb</div>
<div class="t" style="left:562.3px;width:1200px;text-align:center;top:1368.6px;font-size:33.5px;color:#f0f0f0;font-weight:400;">No</div>
<div class="t" style="left:497.3px;width:1200px;text-align:center;top:1493.8px;font-size:38px;color:#ffffff;font-weight:400;">Repair Lamp</div>
<div style="position:absolute;left:19.0px;top:167.0px;width:278.0px;height:89.0px;background:#29262f;border:1.5px solid #5b5a5f;border-radius:10px;box-sizing:border-box;box-shadow:0 0 3px 1px rgba(160,160,160,0.30), inset 0 0 0 1.5px #333238"></div>
<svg style="position:absolute;left:0;top:0" width="320" height="270" viewBox="0 0 320 270">
<g fill="#b1b1b1"><rect x="50" y="198" width="36" height="4"/><rect x="50" y="208" width="36" height="4"/><rect x="50" y="218" width="36" height="4"/></g>
<g fill="#57545b">
 <rect x="114" y="192.5" width="28" height="5"/>
 <rect x="122" y="190" width="12" height="4" rx="1.5"/>
</g>
<rect x="118.5" y="204.5" width="20" height="21.5" rx="2.5" fill="none" stroke="#57545b" stroke-width="4"/>
<g fill="#57545b">
 <path transform="translate(164.5,186) scale(2.05)" d="M12.5 8c-2.65 0-5.05.99-6.9 2.6L2 7v9h9l-3.62-3.62c1.39-1.16 3.16-1.88 5.12-1.88 3.54 0 6.55 2.31 7.6 5.5l2.37-.78C21.08 11.03 17.15 8 12.5 8z"/>
 <path transform="translate(222.5,186) scale(2.05)" d="M18.4 10.6C16.55 8.99 14.15 8 11.5 8c-4.65 0-8.58 3.03-9.96 7.22L3.9 16c1.05-3.19 4.05-5.5 7.6-5.5 1.95 0 3.73.72 5.12 1.88L13 16h9V7l-3.6 3.6z"/>
</g>
</svg>
<div style="position:absolute;left:19.0px;top:723.0px;width:98.0px;height:749.0px;background:#29262f;border:1.5px solid #5b5a5f;border-radius:10px;box-sizing:border-box;box-shadow:0 0 3px 1px rgba(160,160,160,0.30), inset 0 0 0 1.5px #333238"></div>
<svg style="position:absolute;left:0;top:700" width="130" height="800" viewBox="0 700 130 800">
<line x1="43.5" y1="824" x2="43.5" y2="866" stroke="#7d7552" stroke-width="2"/>
<rect x="39.5" y="911.5" width="40" height="26" fill="none" stroke="#fff" stroke-width="3"/>
<ellipse cx="61" cy="1003.5" rx="22.5" ry="14" fill="none" stroke="#fff" stroke-width="3"/>
<line x1="39" y1="1080.5" x2="86" y2="1080.5" stroke="#fff" stroke-width="2.5"/>
<path d="M84 1076.5L92 1080.5L84 1084.5Z" fill="#fff"/>
<path d="M39.5 1159.5H81V1155.5L90.5 1162.5L81 1169.5V1165.5H39.5Z" fill="none" stroke="#fff" stroke-width="2.2" stroke-linejoin="round"/>
<path d="M57 1223.5C53 1226.5 50.5 1229.5 51.8 1232C53.5 1235 60 1233.5 64 1234.2C68 1235 67.5 1239.5 64 1241.5C60 1244 52.3 1246 51.8 1251C51.3 1255.5 54.5 1257.5 58 1258" fill="none" stroke="#b8b8b8" stroke-width="4.2"/>
<path d="M63.9 1258V1253.5L79.6 1237.8L84.5 1242.7L69 1258.2Z" fill="none" stroke="#b8b8b8" stroke-width="3.5" stroke-linejoin="miter"/>
<path d="M80.7 1235.1L85.3 1230.3L92.1 1236.8L87.4 1241.6Z" fill="#b8b8b8" stroke="#b8b8b8" stroke-width="1" stroke-linejoin="round"/>
<g fill="none" stroke="#b8b8b8" stroke-width="4.2">
 <circle cx="59.9" cy="1316" r="11.9"/>
 <path d="M78.2 1316H81.6Q83.6 1316 83.6 1318V1337.7Q83.6 1339.7 81.6 1339.7H62.2Q60.2 1339.7 60.2 1337.7V1334.2"/>
 <rect x="49.5" y="1373.5" width="33" height="33" rx="2"/>
 <line x1="66" y1="1380" x2="66" y2="1400" stroke-width="3.6"/>
 <line x1="56" y1="1390" x2="76" y2="1390" stroke-width="3.6"/>
</g>
<polyline points="58.5,1440.5 68,1450 77.5,1440.5" fill="none" stroke="#8a8a8a" stroke-width="3.6"/>
</svg>
<div class="t" style="left:93.0px;top:1022.9px;font-size:15.5px;color:#b8b8b8;font-weight:400;">F</div>
<div class="t" style="left:93.0px;top:1102.9px;font-size:15.5px;color:#b8b8b8;font-weight:400;">C</div>
<div class="t" style="left:93.0px;top:1266.4px;font-size:15.5px;color:#b8b8b8;font-weight:400;">X</div>
<div style="position:absolute;left:2620.0px;top:167.0px;width:89.0px;height:89.0px;background:#29262f;border:1.5px solid #5b5a5f;border-radius:10px;box-sizing:border-box;box-shadow:0 0 3px 1px rgba(160,160,160,0.30), inset 0 0 0 1.5px #333238"></div>
<svg style="position:absolute;left:2600px;top:180px" width="100" height="70" viewBox="2600 180 100 70">
<path d="M2647.5 222V211A12.5 13.5 0 0 1 2672.5 211V222Z" fill="#a6a6a6"/>
<rect x="2644" y="221.5" width="32" height="2.6" fill="#a6a6a6"/>
<circle cx="2660" cy="197" r="1.8" fill="#a6a6a6"/>
<path d="M2656.8 224H2663.2V225.5A3.2 3.2 0 0 1 2656.8 225.5Z" fill="#a6a6a6"/>
</svg>
<div style="position:absolute;left:2220.0px;top:267.0px;width:485.0px;height:1166.0px;background:#29262f;border:1.5px solid #5b5a5f;border-radius:10px;box-sizing:border-box;box-shadow:0 0 3px 1px rgba(160,160,160,0.30), inset 0 0 0 1.5px #333238"></div>
<div class="t" style="left:2409.0px;top:286.7px;font-size:25.5px;color:#d3d3d3;font-weight:700;">Format</div>
<div style="position:absolute;left:2222.0px;top:329.0px;width:481.0px;height:2.5px;background:#0c0b0e"></div>
<div style="position:absolute;left:2463.0px;top:331.0px;width:240.0px;height:67.5px;background:#000"></div>
<div style="position:absolute;left:2462.0px;top:331.0px;width:1.5px;height:69.0px;background:#151318"></div>
<div class="t" style="left:2291.0px;top:352.3px;font-size:25.3px;color:#7f7f7f;font-weight:700;">Diagram</div>
<div class="t" style="left:2553.5px;top:349.8px;font-size:25.4px;color:#8a8a8a;font-weight:700;">Style</div>
<svg style="position:absolute;left:2200px;top:260px" width="520" height="1100" viewBox="2200 260 520 1100">
<polyline points="2607.5,303 2616,294 2624.5,303" fill="none" stroke="#7a7a7a" stroke-width="3.8"/>
<g stroke="#7f7f7f" stroke-width="3.8"><line x1="2659.5" y1="290.5" x2="2676.5" y2="307"/><line x1="2676.5" y1="290.5" x2="2659.5" y2="307"/></g>
</svg>
<div class="t" style="left:2250.5px;top:434.2px;font-size:23.4px;color:#7f7f7f;font-weight:700;">View</div>
<div style="position:absolute;left:2250.5px;top:488.5px;width:31.0px;height:31.5px;background:#fff;border:3px solid #8b8b8b;border-radius:7px;box-sizing:border-box"></div>
<div style="position:absolute;left:2250.5px;top:531.8px;width:31.0px;height:31.5px;background:#fff;border:3px solid #8b8b8b;border-radius:7px;box-sizing:border-box"></div>
<div style="position:absolute;left:2250.5px;top:579.0px;width:31.0px;height:31.5px;background:#fff;border:3px solid #8b8b8b;border-radius:7px;box-sizing:border-box"></div>
<div class="t" style="left:2295.0px;top:488.1px;font-size:23.7px;color:#7f7f7f;font-weight:400;">Grid</div>
<div class="t" style="left:2295.0px;top:532.6px;font-size:23.7px;color:#7f7f7f;font-weight:400;">Page View</div>
<div class="t" style="left:2295.0px;top:580.7px;font-size:23.7px;color:#7f7f7f;font-weight:400;">Background</div>
<div style="position:absolute;left:2450.0px;top:572.4px;width:220.0px;height:42.8px;border:2px solid #5b5f60;border-radius:7px;box-sizing:border-box"></div>
<div class="t" style="left:1959.5px;width:1200px;text-align:center;top:582.4px;font-size:24.6px;color:#c9c9c9;font-weight:400;">Change...</div>
<div style="position:absolute;left:2222.0px;top:633.5px;width:481.0px;height:2.3px;background:#0e0d10"></div>
<div class="t" style="left:2250.5px;top:662.8px;font-size:23.6px;color:#7f7f7f;font-weight:700;">Options</div>
<div style="position:absolute;left:2250.5px;top:711.0px;width:31.5px;height:32.0px;background:#3478f6;border-radius:7px"></div>
<svg style="position:absolute;left:2250.5px;top:711px" width="32" height="32" viewBox="0 0 32 32"><polyline points="7,16.5 13.5,23.5 24,9" fill="none" stroke="#fff" stroke-width="4" stroke-linecap="round" stroke-linejoin="round"/></svg>
<div style="position:absolute;left:2250.5px;top:759.0px;width:31.5px;height:32.0px;background:#3478f6;border-radius:7px"></div>
<svg style="position:absolute;left:2250.5px;top:759px" width="32" height="32" viewBox="0 0 32 32"><polyline points="7,16.5 13.5,23.5 24,9" fill="none" stroke="#fff" stroke-width="4" stroke-linecap="round" stroke-linejoin="round"/></svg>
<div style="position:absolute;left:2250.5px;top:807.0px;width:31.5px;height:32.0px;background:#3478f6;border-radius:7px"></div>
<svg style="position:absolute;left:2250.5px;top:807px" width="32" height="32" viewBox="0 0 32 32"><polyline points="7,16.5 13.5,23.5 24,9" fill="none" stroke="#fff" stroke-width="4" stroke-linecap="round" stroke-linejoin="round"/></svg>
<div style="position:absolute;left:2250.5px;top:855.2px;width:31.5px;height:32.0px;background:#3478f6;border-radius:7px"></div>
<svg style="position:absolute;left:2250.5px;top:855.2px" width="32" height="32" viewBox="0 0 32 32"><polyline points="7,16.5 13.5,23.5 24,9" fill="none" stroke="#fff" stroke-width="4" stroke-linecap="round" stroke-linejoin="round"/></svg>
<div style="position:absolute;left:2250.5px;top:903.3px;width:31.0px;height:31.5px;background:#fff;border:3px solid #8b8b8b;border-radius:7px;box-sizing:border-box"></div>
<div class="t" style="left:2295.0px;top:712.9px;font-size:23.8px;color:#7f7f7f;font-weight:400;">Connection Arrows</div>
<div class="t" style="left:2295.0px;top:760.6px;font-size:23.8px;color:#7f7f7f;font-weight:400;">Connection Points</div>
<div class="t" style="left:2295.0px;top:808.7px;font-size:23.8px;color:#7f7f7f;font-weight:400;">Guides</div>
<div class="t" style="left:2295.0px;top:856.8px;font-size:23.8px;color:#7f7f7f;font-weight:400;">Autosave</div>
<div class="t" style="left:2295.0px;top:904.9px;font-size:23.8px;color:#7f7f7f;font-weight:400;">Mathematical Typesetting</div>
<div style="position:absolute;left:2580px;top:904px;width:27.5px;height:27.5px;border:2.5px solid #5a5a5a;border-radius:50%;box-sizing:border-box"></div>
<div class="t" style="left:1993.8px;width:1200px;text-align:center;top:910.4px;font-size:19px;color:#5a5a5a;font-weight:700;">?</div>
<div style="position:absolute;left:2222.0px;top:958.0px;width:481.0px;height:2.3px;background:#0e0d10"></div>
<div class="t" style="left:2250.7px;top:986.3px;font-size:23.7px;color:#7f7f7f;font-weight:700;">Paper Size</div>
<div style="position:absolute;left:2250.4px;top:1030.5px;width:411.0px;height:41.0px;background:#323036;border:2px solid #585c5d;border-radius:8px;box-sizing:border-box"></div>
<div class="t" style="left:2264.8px;top:1039.9px;font-size:24.9px;color:#c8c8c8;font-weight:400;">A4 (210 mm x 297 mm)</div>
<svg style="position:absolute;left:2625px;top:1036px" width="30" height="30" viewBox="2625 1036 30 30">
<polyline points="2633,1049 2640,1042.5 2647,1049" fill="none" stroke="#c0c0c0" stroke-width="2.6"/>
<polyline points="2633,1053 2640,1059.5 2647,1053" fill="none" stroke="#c0c0c0" stroke-width="2.6"/>
</svg>
<div style="position:absolute;left:2262px;top:1094px;width:32px;height:32px;border-radius:50%;background:#3478f6"></div>
<div style="position:absolute;left:2271.2px;top:1103.2px;width:13.6px;height:13.6px;border-radius:50%;background:#fff"></div>
<div class="t" style="left:2307.0px;top:1102.5px;font-size:23.6px;color:#7f7f7f;font-weight:400;">Portrait</div>
<div style="position:absolute;left:2403px;top:1094px;width:32px;height:32px;border-radius:50%;background:#fff;border:3px solid #8b8b8b;box-sizing:border-box"></div>
<div class="t" style="left:2448.0px;top:1102.5px;font-size:23.6px;color:#7f7f7f;font-weight:400;">Landscape</div>
<div style="position:absolute;left:2222.0px;top:1151.7px;width:481.0px;height:2.3px;background:#0e0d10"></div>
<div style="position:absolute;left:2250.4px;top:1182.2px;width:419.1px;height:41.3px;border:2px solid #5b5f60;border-radius:8px;box-sizing:border-box"></div>
<div class="t" style="left:1859.6px;width:1200px;text-align:center;top:1191.3px;font-size:24.9px;color:#c9c9c9;font-weight:400;">Edit Data...</div>
<div style="position:absolute;left:2250.4px;top:1232.6px;width:419.1px;height:40.7px;border:2px solid #5b5f60;border-radius:8px;box-sizing:border-box"></div>
<div class="t" style="left:1859.9px;width:1200px;text-align:center;top:1240.7px;font-size:25.2px;color:#c9c9c9;font-weight:400;">Clear Default Style</div>
<div style="position:absolute;left:2222.0px;top:1293.7px;width:481.0px;height:2.3px;background:#0e0d10"></div>
<div style="position:absolute;left:2297.0px;top:1935.0px;width:412.0px;height:89.5px;background:#29262f;border:1.5px solid #5b5a5f;border-radius:10px;box-sizing:border-box;box-shadow:0 0 3px 1px rgba(160,160,160,0.30), inset 0 0 0 1.5px #333238"></div>
<div class="t" style="left:2330.7px;top:1967.1px;font-size:27.4px;color:#8f8f8f;font-weight:400;">Page-1</div>
<div class="t" style="left:2524.2px;top:1966.9px;font-size:27.6px;color:#8f8f8f;font-weight:400;">160%</div>
<svg style="position:absolute;left:2420px;top:1955px" width="270" height="50" viewBox="2420 1955 270 50">
<polyline points="2432.5,1984 2439.5,1976 2446.5,1984" fill="none" stroke="#606060" stroke-width="4"/>
<polyline points="2612.5,1984 2619.5,1976 2626.5,1984" fill="none" stroke="#606060" stroke-width="4"/>
<rect x="2474" y="1976" width="28" height="4.5" fill="#b2b2b2"/>
<rect x="2646" y="1976" width="28.5" height="4.5" fill="#b6b6b6"/>
<rect x="2658" y="1964" width="4.5" height="29" fill="#b6b6b6"/>
</svg>
<div style="position:absolute;left:45.0px;top:235.0px;width:552.0px;height:778.5px;background:#29262f;border:2px solid #565c5c;border-radius:9px;box-sizing:border-box"></div>
<div style="position:absolute;left:52.0px;top:299.0px;width:537.0px;height:2.0px;background:#565c5c"></div>
<div style="position:absolute;left:52.0px;top:364.0px;width:537.0px;height:2.0px;background:#565c5c"></div>
<div style="position:absolute;left:52.0px;top:481.0px;width:537.0px;height:2.0px;background:#565c5c"></div>
<div style="position:absolute;left:52.0px;top:753.0px;width:537.0px;height:2.0px;background:#565c5c"></div>
<div style="position:absolute;left:52.0px;top:818.0px;width:537.0px;height:2.0px;background:#565c5c"></div>
<div style="position:absolute;left:52.0px;top:882.0px;width:537.0px;height:2.0px;background:#565c5c"></div>
<div style="position:absolute;left:52.0px;top:947.0px;width:537.0px;height:2.0px;background:#565c5c"></div>
<div class="t" style="left:113.3px;top:253.5px;font-size:28.6px;color:#d6d6d6;font-weight:400;">Settings</div>
<div class="t" style="left:113.3px;top:318.5px;font-size:28.6px;color:#d6d6d6;font-weight:400;">File</div>
<div class="t" style="left:113.3px;top:383.3px;font-size:28.6px;color:#d6d6d6;font-weight:400;">Export as</div>
<div class="t" style="left:113.3px;top:435.2px;font-size:28.6px;color:#d6d6d6;font-weight:400;">Import from</div>
<div class="t" style="left:113.3px;top:499.8px;font-size:28.6px;color:#d6d6d6;font-weight:400;">Find/Replace</div>
<div class="t" style="left:113.3px;top:551.5px;font-size:28.6px;color:#d6d6d6;font-weight:400;">Shapes</div>
<div class="t" style="left:113.3px;top:603.4px;font-size:28.6px;color:#d6d6d6;font-weight:400;">Format</div>
<div class="t" style="left:113.3px;top:655.6px;font-size:28.6px;color:#d6d6d6;font-weight:400;">Layers</div>
<div class="t" style="left:113.3px;top:707.5px;font-size:28.6px;color:#d6d6d6;font-weight:400;">Tags</div>
<div class="t" style="left:113.3px;top:773.3px;font-size:28.6px;color:#d6d6d6;font-weight:400;">Page Setup...</div>
<div class="t" style="left:113.3px;top:836.8px;font-size:28.6px;color:#d6d6d6;font-weight:400;">Print...</div>
<div class="t" style="left:113.3px;top:901.3px;font-size:28.6px;color:#d6d6d6;font-weight:400;">Help</div>
<div class="t" style="left:113.3px;top:965.3px;font-size:28.6px;color:#d6d6d6;font-weight:400;">Close</div>
<div class="t" style="right:2156.0px;text-align:right;top:499.8px;font-size:28.6px;color:#9c9c9c;font-weight:400;">Cmd+F</div>
<div class="t" style="right:2156.0px;text-align:right;top:551.5px;font-size:28.6px;color:#9c9c9c;font-weight:400;">Cmd+Shift+K</div>
<div class="t" style="right:2156.0px;text-align:right;top:603.4px;font-size:28.6px;color:#9c9c9c;font-weight:400;">Cmd+Shift+P</div>
<div class="t" style="right:2156.0px;text-align:right;top:655.6px;font-size:28.6px;color:#9c9c9c;font-weight:400;">Cmd+Shift+L</div>
<div class="t" style="right:2156.0px;text-align:right;top:707.5px;font-size:28.6px;color:#9c9c9c;font-weight:400;">Cmd+K</div>
<div class="t" style="right:2156.0px;text-align:right;top:836.8px;font-size:28.6px;color:#9c9c9c;font-weight:400;">Cmd+P</div>
<svg style="position:absolute;left:565px;top:260.2px" width="10" height="16" viewBox="0 0 10 16"><path d="M0.5 0.8L8.5 8L0.5 15.2Z" fill="#c4c4c4"/></svg>
<svg style="position:absolute;left:565px;top:325.2px" width="10" height="16" viewBox="0 0 10 16"><path d="M0.5 0.8L8.5 8L0.5 15.2Z" fill="#c4c4c4"/></svg>
<svg style="position:absolute;left:565px;top:390.0px" width="10" height="16" viewBox="0 0 10 16"><path d="M0.5 0.8L8.5 8L0.5 15.2Z" fill="#c4c4c4"/></svg>
<svg style="position:absolute;left:565px;top:441.9px" width="10" height="16" viewBox="0 0 10 16"><path d="M0.5 0.8L8.5 8L0.5 15.2Z" fill="#c4c4c4"/></svg>
<svg style="position:absolute;left:565px;top:908.0px" width="10" height="16" viewBox="0 0 10 16"><path d="M0.5 0.8L8.5 8L0.5 15.2Z" fill="#c4c4c4"/></svg>
<svg style="position:absolute;left:67px;top:606px" width="28" height="24" viewBox="0 0 28 24"><polyline points="2.5,14.5 9.5,22 26,4.5" fill="none" stroke="#141216" stroke-width="3" stroke-linejoin="miter" opacity="0.8"/><polyline points="2,13 9,20.5 25.5,3" fill="none" stroke="#8f8f8f" stroke-width="3.2" stroke-linejoin="miter"/></svg>
<div style="position:absolute;left:579.0px;top:235.0px;width:444.0px;height:533.5px;background:#29262f;border:2px solid #565c5c;border-radius:9px;box-sizing:border-box"></div>
<div style="position:absolute;left:586.0px;top:350.7px;width:429.0px;height:2.0px;background:#565c5c"></div>
<div style="position:absolute;left:586.0px;top:467.9px;width:429.0px;height:2.0px;background:#565c5c"></div>
<div style="position:absolute;left:586.0px;top:637.0px;width:429.0px;height:2.0px;background:#565c5c"></div>
<div style="position:absolute;left:586.0px;top:701.0px;width:429.0px;height:2.0px;background:#565c5c"></div>
<div class="t" style="left:647.2px;top:253.8px;font-size:28.6px;color:#d6d6d6;font-weight:400;">Appearance</div>
<div class="t" style="left:647.2px;top:306.0px;font-size:28.6px;color:#d6d6d6;font-weight:400;">Theme</div>
<div class="t" style="left:647.2px;top:370.5px;font-size:28.6px;color:#d6d6d6;font-weight:400;">Language</div>
<div class="t" style="left:647.2px;top:422.6px;font-size:28.6px;color:#d6d6d6;font-weight:400;">Units</div>
<div class="t" style="left:647.2px;top:486.8px;font-size:28.6px;color:#d6d6d6;font-weight:400;">Copy on connect</div>
<div class="t" style="left:647.2px;top:538.2px;font-size:28.6px;color:#d6d6d6;font-weight:400;">Collapse/Expand</div>
<div class="t" style="left:647.2px;top:590.3px;font-size:28.6px;color:#d6d6d6;font-weight:400;">Tooltips</div>
<div class="t" style="left:647.2px;top:655.4px;font-size:28.6px;color:#d6d6d6;font-weight:400;">Ruler</div>
<div class="t" style="left:647.2px;top:720.1px;font-size:28.6px;color:#d6d6d6;font-weight:400;">Configuration...</div>
<svg style="position:absolute;left:991px;top:260.5px" width="10" height="16" viewBox="0 0 10 16"><path d="M0.5 0.8L8.5 8L0.5 15.2Z" fill="#c4c4c4"/></svg>
<svg style="position:absolute;left:991px;top:312.7px" width="10" height="16" viewBox="0 0 10 16"><path d="M0.5 0.8L8.5 8L0.5 15.2Z" fill="#c4c4c4"/></svg>
<svg style="position:absolute;left:991px;top:377.2px" width="10" height="16" viewBox="0 0 10 16"><path d="M0.5 0.8L8.5 8L0.5 15.2Z" fill="#c4c4c4"/></svg>
<svg style="position:absolute;left:991px;top:429.3px" width="10" height="16" viewBox="0 0 10 16"><path d="M0.5 0.8L8.5 8L0.5 15.2Z" fill="#c4c4c4"/></svg>
<svg style="position:absolute;left:601px;top:488px" width="28" height="24" viewBox="0 0 28 24"><polyline points="2.5,14.5 9.5,22 26,4.5" fill="none" stroke="#141216" stroke-width="3" stroke-linejoin="miter" opacity="0.8"/><polyline points="2,13 9,20.5 25.5,3" fill="none" stroke="#8f8f8f" stroke-width="3.2" stroke-linejoin="miter"/></svg>
<svg style="position:absolute;left:601px;top:540px" width="28" height="24" viewBox="0 0 28 24"><polyline points="2.5,14.5 9.5,22 26,4.5" fill="none" stroke="#141216" stroke-width="3" stroke-linejoin="miter" opacity="0.8"/><polyline points="2,13 9,20.5 25.5,3" fill="none" stroke="#8f8f8f" stroke-width="3.2" stroke-linejoin="miter"/></svg>
<svg style="position:absolute;left:601px;top:592px" width="28" height="24" viewBox="0 0 28 24"><polyline points="2.5,14.5 9.5,22 26,4.5" fill="none" stroke="#141216" stroke-width="3" stroke-linejoin="miter" opacity="0.8"/><polyline points="2,13 9,20.5 25.5,3" fill="none" stroke="#8f8f8f" stroke-width="3.2" stroke-linejoin="miter"/></svg>
<div style="position:absolute;left:1007.0px;top:235.0px;width:338.0px;height:171.0px;background:#29262f;border:2px solid #565c5c;border-radius:9px;box-sizing:border-box"></div>
<div class="t" style="left:1075.4px;top:254.2px;font-size:28.6px;color:#d6d6d6;font-weight:400;">Light</div>
<div class="t" style="left:1075.4px;top:305.8px;font-size:28.6px;color:#d6d6d6;font-weight:400;">Dark</div>
<div class="t" style="left:1075.4px;top:357.6px;font-size:28.6px;color:#d6d6d6;font-weight:400;">Automatic</div>
<svg style="position:absolute;left:1029px;top:306.5px" width="28" height="24" viewBox="0 0 28 24"><polyline points="2.5,14.5 9.5,22 26,4.5" fill="none" stroke="#141216" stroke-width="3" stroke-linejoin="miter" opacity="0.8"/><polyline points="2,13 9,20.5 25.5,3" fill="none" stroke="#8f8f8f" stroke-width="3.2" stroke-linejoin="miter"/></svg>
<div style="position:absolute;left:25.0px;top:167.0px;width:81.0px;height:77.5px;border:5px solid #e9634f;box-sizing:border-box"></div>
<div style="position:absolute;left:45.0px;top:242.3px;width:534.5px;height:56.7px;border:5px solid #e9634f;box-sizing:border-box"></div>
<div style="position:absolute;left:575.0px;top:242.3px;width:432.0px;height:56.7px;border:5px solid #e9634f;box-sizing:border-box"></div>
<div style="position:absolute;left:1007.0px;top:299.3px;width:337.0px;height:56.2px;border:5px solid #e9634f;box-sizing:border-box"></div>
<div style="position:absolute;left:1021.0px;top:2022.0px;width:690.0px;height:11.0px;background:#fff;border-radius:6px"></div>

</body></html>
